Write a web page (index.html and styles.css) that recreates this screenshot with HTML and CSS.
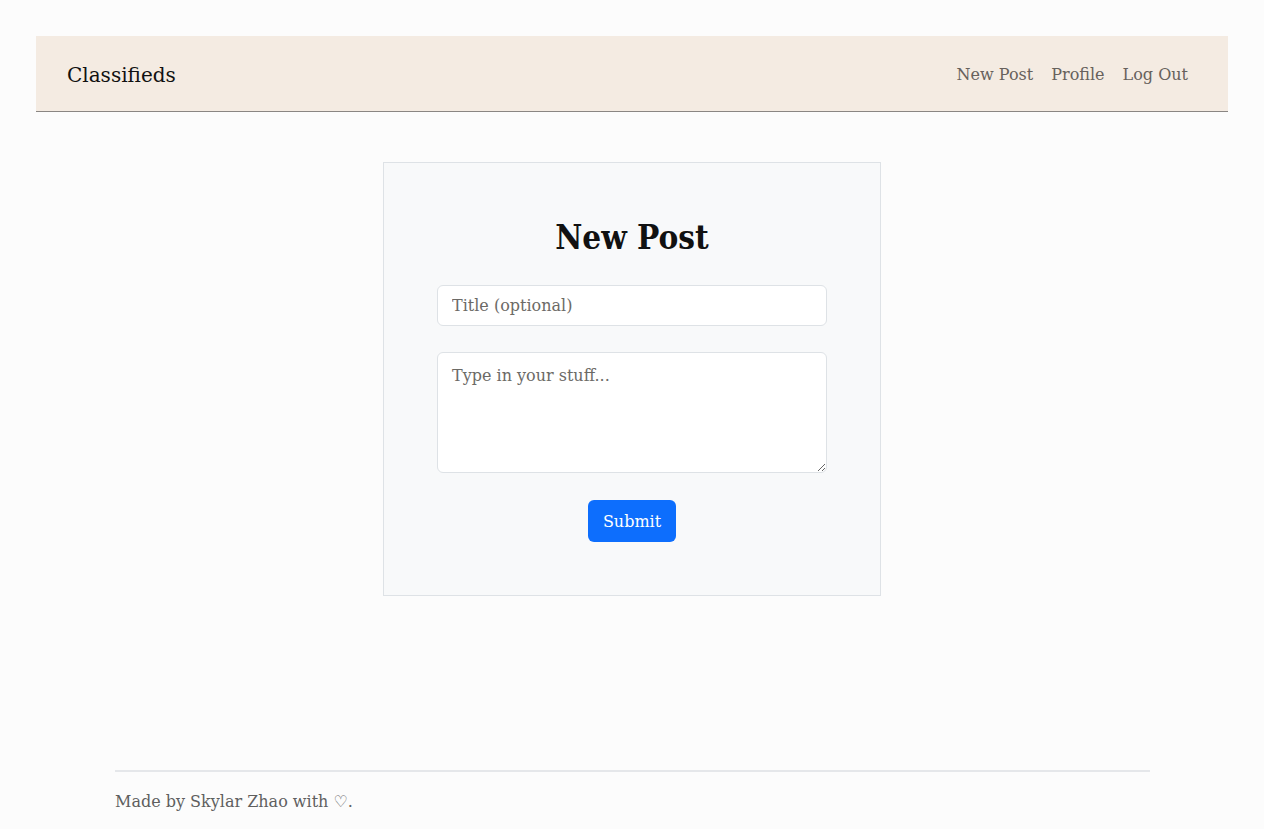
FILE: index.html
```html
<!DOCTYPE html>
<html lang="en">
<head>
<meta charset="utf-8">
<title>Classifieds</title>
<link rel="stylesheet" href="styles.css">
</head>
<body>
<div class="page">
  <header class="navbar">
    <a class="brand" href="#">Classifieds</a>
    <nav class="links">
      <a href="#">New Post</a>
      <a href="#">Profile</a>
      <a href="#">Log Out</a>
    </nav>
  </header>
  <main class="main">
    <form class="card">
      <h1 class="title">New Post</h1>
      <input class="field" type="text" placeholder="Title (optional)">
      <textarea class="field area" placeholder="Type in your stuff..."></textarea>
      <button class="submit" type="button">Submit</button>
    </form>
  </main>
  <footer class="footer">
    <p>Made by Skylar Zhao with &#9825;.</p>
  </footer>
</div>
</body>
</html>
```
FILE: styles.css
```css
* { box-sizing: border-box; }
html, body { margin: 0; padding: 0; }
body {
  background: #fcfcfc;
  font-family: "DejaVu Serif", serif;
  color: #212529;
  height: 829px;
}
.page {
  display: flex;
  flex-direction: column;
  height: 100%;
  padding: 36px 36px 0;
}
.navbar {
  display: flex;
  align-items: center;
  justify-content: space-between;
  height: 76px;
  background: #f4ebe2;
  border-bottom: 1px solid #8a8683;
  padding: 2px 40px 0 31px;
}
.brand {
  font-size: 20px;
  color: #111;
  text-decoration: none;
}
.links { display: flex; gap: 18px; }
.links a {
  font-size: 16px;
  color: #67615c;
  text-decoration: none;
}
.main {
  flex: 1;
  display: flex;
  justify-content: center;
  align-items: flex-start;
  padding-top: 50px;
}
.card {
  width: 498px;
  height: 434px;
  background: #f8f9fa;
  border: 1px solid #dee2e6;
  display: flex;
  flex-direction: column;
  align-items: center;
  padding: 51px 53px 0;
}
.title {
  margin: 0 0 23px;
  font-family: "DejaVu Serif Condensed", "DejaVu Serif", serif;
  font-size: 33px;
  font-weight: 700;
  color: #111;
  line-height: 48px;
}
.field {
  width: 390px;
  height: 41px;
  border: 1px solid #dee2e6;
  border-radius: 6px;
  background: #fff;
  font-family: inherit;
  font-size: 16px;
  padding: 6px 14px;
  color: #212529;
}
.field::placeholder { color: #6c6a66; }
.area {
  height: 121px;
  margin-top: 26px;
  padding-top: 13px;
  resize: vertical;
}
.submit {
  margin-top: 27px;
  width: 88px;
  height: 42px;
  border: none;
  border-radius: 6px;
  background: #0d6efd;
  color: #fff;
  font-family: inherit;
  font-size: 16px;
}
.footer {
  margin: 0 78px 0 79px;
  border-top: 2px solid #e5e7ea;
  height: 59px;
}
.footer p {
  margin: 20px 0 0;
  font-size: 16px;
  color: #5f5f5f;
}
```
